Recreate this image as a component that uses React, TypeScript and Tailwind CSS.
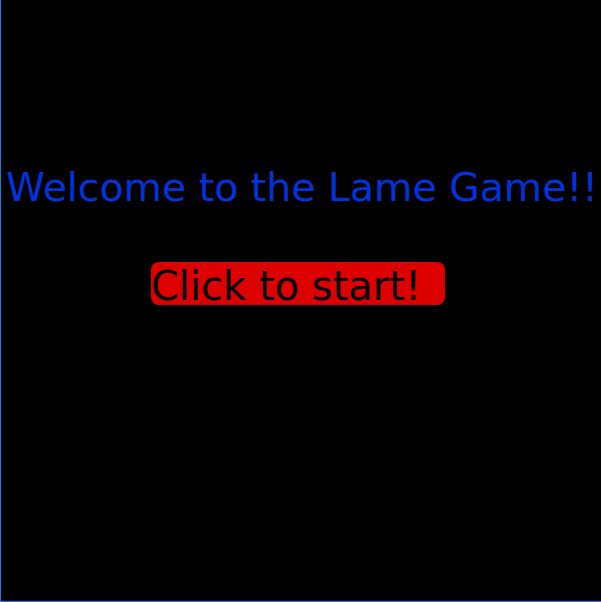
import React from 'react';

export default function App() {
  return (
    <div className="w-[601px] h-[602px] bg-black border-l border-b border-[#1a7fe0] flex flex-col items-center font-['DejaVu_Sans',sans-serif]">
      <h1 className="mt-[163px] ml-[2px] text-[39.4px] leading-[48px] text-[#0033dd] whitespace-nowrap">
        Welcome to the Lame Game!!
      </h1>
      <button className="mt-[51px] mr-[6px] h-[43px] pt-[6px] pr-[24px] rounded-[8px] bg-[#dd0000] text-black text-[40px] leading-[37px] whitespace-nowrap">
        Click to start!
      </button>
    </div>
  );
}
